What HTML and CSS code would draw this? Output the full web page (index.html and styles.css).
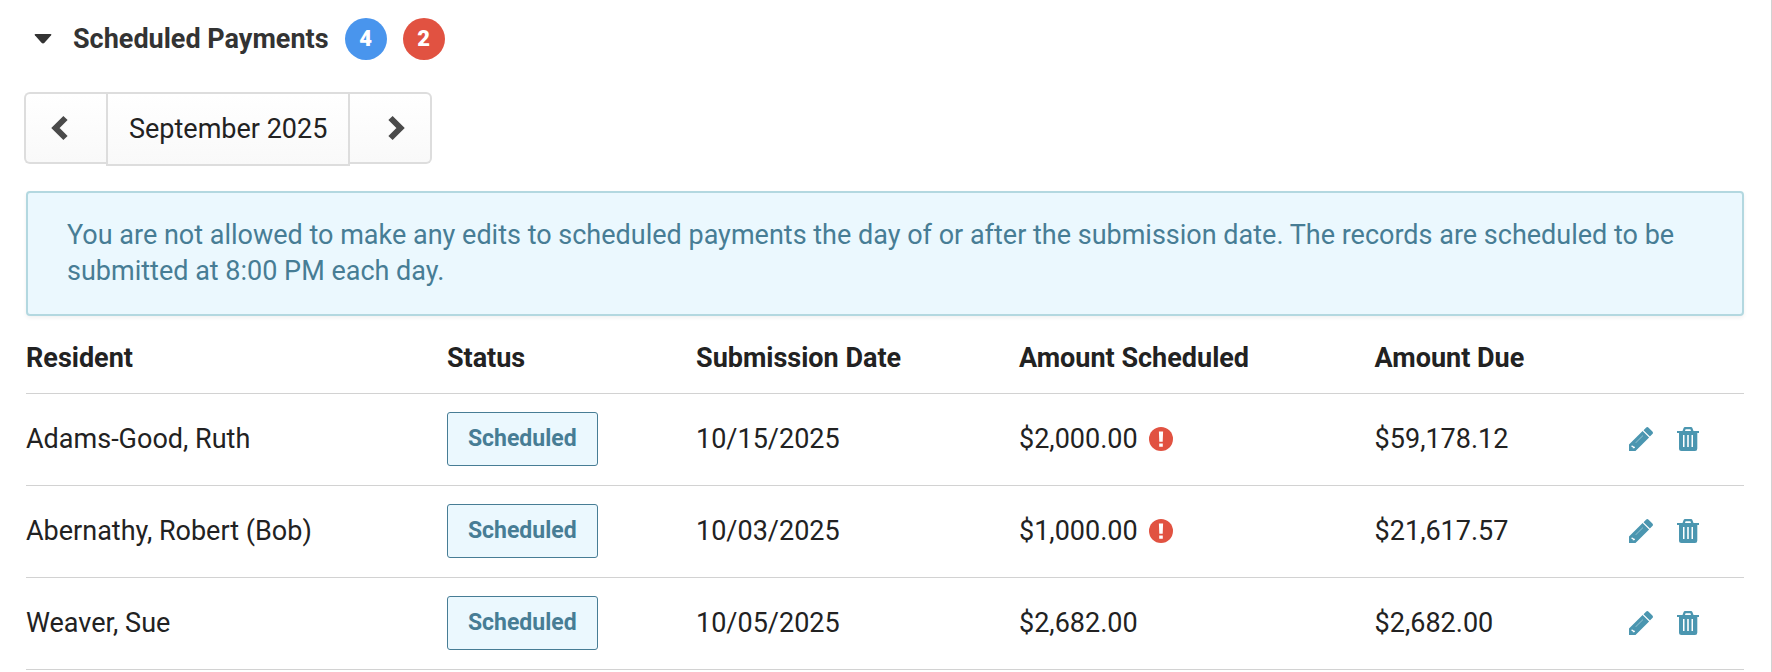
FILE: index.html
```html
<!DOCTYPE html>
<html lang="en">
<head>
  <meta charset="UTF-8" />
  <title>Scheduled Payments</title>
  <link rel="stylesheet" href="styles.css">
</head>
<body>
  <!-- shared icons -->
  <svg class="sprite" aria-hidden="true">
    <symbol id="icon-pencil" viewBox="0 0 24 24">
      <path fill-rule="evenodd" d="M0 24v-6.500L13.600 4l6.500 6.500L6.500 24zM3 18.300l-.5.700v.9h1.200v1.400h1.500l.9-.9-.8-1-1.200-.2zM6.500 15.800l.2.200 7.300-7.300-.2-.2z"/>
      <path d="M14.500 3.200L17 .7q1.300-1.300 2.600 0L23.400 4.500q1.200 1.300 0 2.600L20.900 9.600z"/>
    </symbol>
    <symbol id="icon-trash" viewBox="0 0 22 24">
      <path fill-rule="evenodd" d="M5.500 4L6.500 1.200Q6.900 0 8.100 0h5.800q1.200 0 1.600 1.200l1 2.800H22v2h-1.700v15.500q0 2.500-2.300 2.500H4.500q-2.500 0-2.500-2.500V6H0V4zM8 4h6l-.6-1.800H8.600zM6 8v12h1.500V8zM10.200 8v12h1.600V8zM14.500 8v12H16V8z"/>
    </symbol>
    <symbol id="icon-alert" viewBox="0 0 24 24">
      <circle cx="12" cy="12" r="12"/>
      <path fill="#fff" d="M9.900 4.500h4.200l-.4 10.300h-3.400zM10.200 16.400h3.600v3.400h-3.600z"/>
    </symbol>
  </svg>

  <section class="panel">
    <header class="panel-header">
      <button class="toggle" type="button" aria-label="Collapse section" aria-expanded="true">
        <svg width="18" height="10" viewBox="0 0 18 10"><path d="M1.500 0h15q1.500 0 .6 1.200L10.500 8.800q-1.500 1.400-3 0L.9 1.200Q0 0 1.500 0z"/></svg>
      </button>
      <h2>Scheduled Payments</h2>
      <span class="badge badge-blue">4</span>
      <span class="badge badge-red">2</span>
    </header>

    <div class="month-nav">
      <button class="nav-btn prev" type="button" aria-label="Previous month">
        <svg width="18" height="26" viewBox="0 0 18 26"><path d="M14.500 3L4.500 13l10 10"/></svg>
      </button>
      <button class="nav-btn month" type="button">September 2025</button>
      <button class="nav-btn next" type="button" aria-label="Next month">
        <svg width="18" height="26" viewBox="0 0 18 26"><path d="M3.500 3l10 10-10 10"/></svg>
      </button>
    </div>

    <div class="notice">
      You are not allowed to make any edits to scheduled payments the day of or after the submission date. The records are scheduled to be submitted at 8:00 PM each day.
    </div>

    <table class="payments">
      <thead>
        <tr>
          <th class="col-resident">Resident</th>
          <th class="col-status">Status</th>
          <th class="col-date">Submission Date</th>
          <th class="col-scheduled">Amount Scheduled</th>
          <th class="col-due">Amount Due</th>
          <td></td>
        </tr>
      </thead>
      <tbody>
        <tr>
          <td>Adams-Good, Ruth</td>
          <td><span class="status">Scheduled</span></td>
          <td>10/15/2025</td>
          <td><div class="amount">$2,000.00 <svg class="icon alert"><use href="#icon-alert"/></svg></div></td>
          <td>$59,178.12</td>
          <td>
            <div class="actions">
              <button type="button" aria-label="Edit"><svg class="icon"><use href="#icon-pencil"/></svg></button>
              <button type="button" aria-label="Delete"><svg class="icon trash"><use href="#icon-trash"/></svg></button>
            </div>
          </td>
        </tr>
        <tr>
          <td>Abernathy, Robert (Bob)</td>
          <td><span class="status">Scheduled</span></td>
          <td>10/03/2025</td>
          <td><div class="amount">$1,000.00 <svg class="icon alert"><use href="#icon-alert"/></svg></div></td>
          <td>$21,617.57</td>
          <td>
            <div class="actions">
              <button type="button" aria-label="Edit"><svg class="icon"><use href="#icon-pencil"/></svg></button>
              <button type="button" aria-label="Delete"><svg class="icon trash"><use href="#icon-trash"/></svg></button>
            </div>
          </td>
        </tr>
        <tr>
          <td>Weaver, Sue</td>
          <td><span class="status">Scheduled</span></td>
          <td>10/05/2025</td>
          <td><div class="amount">$2,682.00</div></td>
          <td>$2,682.00</td>
          <td>
            <div class="actions">
              <button type="button" aria-label="Edit"><svg class="icon"><use href="#icon-pencil"/></svg></button>
              <button type="button" aria-label="Delete"><svg class="icon trash"><use href="#icon-trash"/></svg></button>
            </div>
          </td>
        </tr>
      </tbody>
    </table>
  </section>
</body>
</html>
```

FILE: styles.css
```css
* {
  box-sizing: border-box;
}

body {
  margin: 0;
  font-family: Roboto, "Liberation Sans", sans-serif;
  font-size: 27px;
  line-height: 36px;
  color: #222;
  background: #fff;
}

button {
  font: inherit;
  color: inherit;
  cursor: pointer;
}

svg {
  display: block;
}

.sprite {
  position: absolute;
  width: 0;
  height: 0;
}

.panel {
  min-height: 100vh;
  padding: 18px 27px 0 26px;
  border-right: 1px solid #d2d2d2;
}

/* title row */
.panel-header {
  display: flex;
  align-items: center;
  gap: 16px;
  padding-left: 8px;
}

.toggle {
  padding: 0;
  margin-right: 5px;
  border: none;
  background: none;
  fill: #333;
}

h2 {
  margin: 0;
  font-size: 27px;
  font-weight: 700;
  line-height: 36px;
  color: #333;
}

.badge {
  width: 42px;
  height: 42px;
  border-radius: 50%;
  font-size: 22px;
  font-weight: 900;
  line-height: 42px;
  text-align: center;
  color: #fff;
}

.badge-blue {
  background: #4995ed;
}

.badge-red {
  background: #e15241;
}

/* month picker */
.month-nav {
  display: flex;
  align-items: flex-start;
  margin: 32px 0 25px -2px;
}

.nav-btn {
  display: flex;
  align-items: center;
  justify-content: center;
  width: 82px;
  height: 72px;
  padding: 0;
  border: 2px solid #ddd;
  background: linear-gradient(#fff, #f9f9f9);
}

.nav-btn svg {
  fill: none;
  stroke: #4a4a4a;
  stroke-width: 6;
}

.prev {
  padding-right: 12px;
  border-right: none;
  border-radius: 6px 0 0 6px;
}

.month {
  width: auto;
  height: 74px;
  padding: 0 21px;
}

.next {
  padding-left: 12px;
  border-left: none;
  border-radius: 0 6px 6px 0;
}

.notice {
  padding: 24px 39px 25px;
  border: 2px solid #b3d8e0;
  border-radius: 4px;
  background: #ebf8fe;
  box-shadow: 0 2px 4px rgba(0, 0, 0, 0.06);
  color: #477d95;
}

/* payments table */
.payments {
  width: 100%;
  border-collapse: collapse;
  table-layout: fixed;
}

.payments th,
.payments td {
  height: 92px;
  padding: 0;
  border-bottom: 1px solid #d2d2d2;
  text-align: left;
}

.payments thead th,
.payments thead td {
  height: 77px;
  padding-top: 8px;
}

.col-resident {
  width: 24.5%;
}

.col-status {
  width: 14.5%;
}

.col-date {
  width: 18.8%;
}

.col-scheduled {
  width: 20.7%;
}

.col-due {
  width: 14.8%;
}

.status {
  display: inline-block;
  padding: 8px 20px;
  border: 1px solid #477d95;
  border-radius: 3px;
  background: #ebf8fe;
  font-size: 23px;
  font-weight: 700;
  color: #477d95;
}

.amount {
  display: flex;
  align-items: center;
  gap: 11px;
}

.icon {
  width: 24px;
  height: 24px;
}

.trash {
  width: 22px;
}

.alert {
  fill: #e15241;
}

.actions {
  display: flex;
  gap: 24px;
}

.actions button {
  padding: 0;
  border: none;
  background: none;
  fill: #4b96b0;
}
```
